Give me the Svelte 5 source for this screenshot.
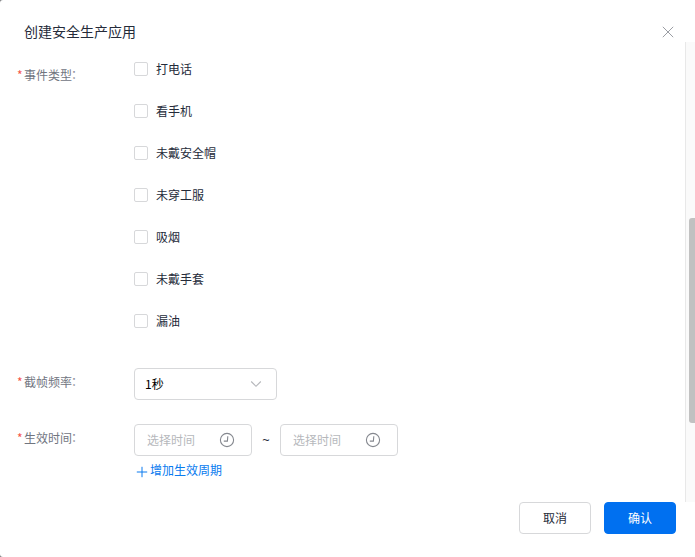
<script>
    let events = $state([
        { name: '打电话', checked: false },
        { name: '看手机', checked: false },
        { name: '未戴安全帽', checked: false },
        { name: '未穿工服', checked: false },
        { name: '吸烟', checked: false },
        { name: '未戴手套', checked: false },
        { name: '漏油', checked: false }
    ]);
</script>

{#snippet fieldLabel(text)}
    <div class="label"><i>*</i>{text}<span class="colon">：</span></div>
{/snippet}

{#snippet timeInput()}
    <div class="time">
        <input type="text" placeholder="选择时间" />
        <svg width="16" height="16" viewBox="0 0 16 16">
            <circle cx="8" cy="8" r="6.6" />
            <path d="M8.8 4.2L8.4 9.1H4.8" />
        </svg>
    </div>
{/snippet}

<div class="backdrop">
    <div class="dialog">
        <header class="dialog__header">
            <h2>创建安全生产应用</h2>
            <button class="close" aria-label="关闭">
                <svg width="12" height="12" viewBox="0 0 12 12">
                    <path d="M.8.8l10.4 10.4M11.2.8L.8 11.2" />
                </svg>
            </button>
        </header>

        <div class="dialog__body">
            <form class="form">
                <div class="row row--events">
                    {@render fieldLabel('事件类型')}
                    <div class="events">
                        {#each events as event}
                            <label class="event">
                                <input type="checkbox" bind:checked={event.checked} />
                                <span>{event.name}</span>
                            </label>
                        {/each}
                    </div>
                </div>
                <div class="row row--rate">
                    {@render fieldLabel('截帧频率')}
                    <div class="select">
                        <span>1秒</span>
                        <svg width="12" height="8" viewBox="0 0 12 8">
                            <path d="M1.2 1.5L6 6.3l4.8-4.8" />
                        </svg>
                    </div>
                </div>
                <div class="row">
                    {@render fieldLabel('生效时间')}
                    <div>
                        <div class="period">
                            {@render timeInput()}
                            <span class="period__to">~</span>
                            {@render timeInput()}
                        </div>
                        <button class="add" type="button">
                            <svg width="12" height="12" viewBox="0 0 12 12">
                                <path d="M6 .8v10.4M.8 6h10.4" />
                            </svg>
                            增加生效周期
                        </button>
                    </div>
                </div>
            </form>
            <div class="scrollbar"><div class="scrollbar__thumb"></div></div>
        </div>

        <footer class="dialog__footer">
            <button class="btn">取消</button>
            <button class="btn btn--primary">确认</button>
        </footer>
    </div>
</div>

<style>
    .backdrop {
        width: 695px;
        height: 557px;
        overflow: hidden;
        background: #7f8184;
        font: 12px/18px "Noto Sans CJK SC", sans-serif;
        color: #252b3a;
    }

    .backdrop * {
        box-sizing: border-box;
    }

    .dialog {
        display: flex;
        flex-direction: column;
        height: 557px;
        background: #fff;
        border-radius: 3px 0 0 3px;
    }

    svg {
        display: block;
        flex: none;
        fill: none;
    }

    button {
        margin: 0;
        padding: 0;
        border: 0;
        background: none;
        font: inherit;
        cursor: pointer;
    }

    .dialog__header {
        display: flex;
        justify-content: space-between;
        height: 42px;
        padding: 21px 21px 0 24px;
    }

    h2 {
        margin: 0;
        font-size: 14px;
        line-height: 21px;
        font-weight: 400;
    }

    .close {
        width: 12px;
        height: 12px;
        margin-top: 5px;
    }

    .close svg {
        stroke: #9a9da3;
    }

    .dialog__body {
        display: flex;
        height: 460px;
    }

    .form {
        flex: 1;
        padding-top: 18px;
    }

    .row {
        display: flex;
    }

    .row--events {
        height: 308px;
    }

    .row--rate {
        height: 56px;
    }

    .label {
        width: 117px;
        margin: 5px 0 0 17px;
        color: #71757f;
        white-space: nowrap;
    }

    .label i {
        display: inline-block;
        width: 7px;
        color: #f5554a;
        font-style: normal;
    }

    .colon {
        margin-left: -1px;
        line-height: 1;
        vertical-align: 1px;
        opacity: 0.8;
    }

    .row--events .label {
        margin-top: 6px;
    }

    .event {
        display: flex;
        gap: 8px;
        height: 42px;
    }

    .event input {
        appearance: none;
        width: 14px;
        height: 14px;
        margin: 2px 0 0;
        border: 1px solid #d7d8da;
        border-radius: 2px;
        background: #fff;
    }

    .select {
        display: flex;
        align-items: center;
        justify-content: space-between;
        width: 143px;
        height: 32px;
        padding: 0 14px 0 10px;
        border: 1px solid #d7d8da;
        border-radius: 4px;
        color: #000;
    }

    .select svg {
        stroke: #b5b7bb;
        stroke-width: 1.1;
    }

    .period {
        display: flex;
        align-items: center;
    }

    .period__to {
        width: 28px;
        font-family: "Open Sans", sans-serif;
        font-size: 13px;
        font-weight: 500;
        text-align: center;
    }

    .time {
        display: flex;
        align-items: center;
        width: 118px;
        height: 32px;
        padding-left: 12px;
        border: 1px solid #d7d8da;
        border-radius: 4px;
    }

    .time input {
        width: 72px;
        padding: 0;
        border: 0;
        outline: 0;
        background: none;
        font: inherit;
    }

    .time input::placeholder {
        color: #b6b8bc;
        opacity: 1;
    }

    .time svg {
        stroke: #85888f;
        stroke-width: 1.1;
    }

    .add {
        display: flex;
        align-items: center;
        gap: 2px;
        margin: 5px 0 0 2px;
        color: #0a7bef;
    }

    .add svg {
        margin-top: 4px;
        stroke: #0a7bef;
    }

    .scrollbar {
        width: 10px;
        overflow: hidden;
        padding: 176px 0 0 3px;
        border-left: 1px solid #e8e8e8;
        background: #fafafa;
    }

    .scrollbar__thumb {
        width: 8px;
        height: 205px;
        border-radius: 3px;
        background: #c1c1c1;
    }

    .dialog__footer {
        display: flex;
        justify-content: flex-end;
        gap: 13px;
        padding-right: 19px;
    }

    .btn {
        width: 72px;
        height: 32px;
        padding-bottom: 1px;
        border: 1px solid #d7d8da;
        border-radius: 4px;
        background: #fff;
        color: #252b3a;
    }

    .btn--primary {
        border-color: #0070f0;
        background: #0070f0;
        color: #fff;
    }
</style>
